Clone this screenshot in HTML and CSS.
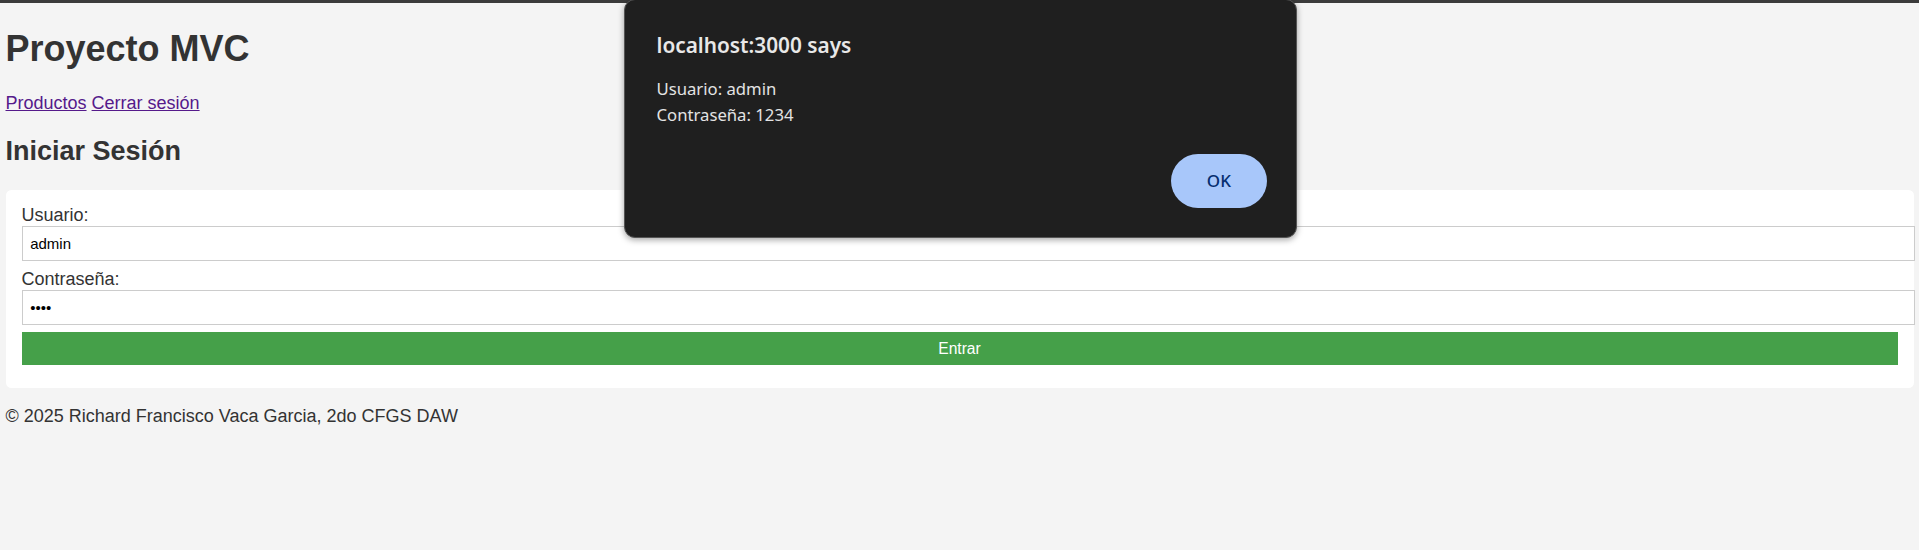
FILE: index.html
```html
<!DOCTYPE html>
<html lang="es">
<head>
<meta charset="utf-8">
<title>Proyecto MVC</title>
<link rel="stylesheet" href="styles.css">
</head>
<body>
<div class="topbar"></div>
<div class="page">
  <header>
    <h1 class="title">Proyecto MVC</h1>
    <nav class="nav"><a href="#productos">Productos</a> <a href="#logout">Cerrar sesión</a></nav>
  </header>
  <main>
    <h2 class="subtitle">Iniciar Sesión</h2>
    <form class="card" onsubmit="return false;">
      <label class="label" for="usuario">Usuario:</label>
      <input class="input" id="usuario" type="text" value="admin">
      <label class="label" for="pass">Contraseña:</label>
      <input class="input" id="pass" type="password" value="1234">
      <button class="submit" type="submit">Entrar</button>
    </form>
  </main>
  <footer class="footer">© 2025 Richard Francisco Vaca Garcia, 2do CFGS DAW</footer>
</div>

<div class="alert" role="alertdialog">
  <div class="alert-title">localhost:3000 says</div>
  <div class="alert-body">
    <div class="alert-line">Usuario: admin</div>
    <div class="alert-line">Contraseña: 1234</div>
  </div>
  <div class="alert-actions">
    <button class="alert-ok" type="button">OK</button>
  </div>
</div>
</body>
</html>
```
FILE: styles.css
```css
html, body {
  margin: 0;
  padding: 0;
}
body {
  background: #f4f4f4;
  color: #333;
  font-family: "Liberation Sans", Arial, sans-serif;
  font-size: 18px;
  position: relative;
  min-height: 550px;
}
.topbar {
  height: 3px;
  background: #3b3b3b;
}
.page {
  padding: 0 5.5px;
  display: flow-root;
}
.title {
  font-size: 36px;
  font-weight: bold;
  margin: 25.6px 0 23.6px;
  line-height: 40.5px;
}
.nav {
  line-height: 20.2px;
}
.nav a {
  color: #551a8b;
  text-decoration: underline;
}
.subtitle {
  font-size: 27px;
  font-weight: bold;
  margin: 23.4px 0 23.3px;
  line-height: 30.3px;
}
.card {
  background: #fff;
  border-radius: 5.5px;
  padding: 15px 16px 22.7px;
  margin: 0;
}
.label {
  display: block;
  line-height: 21.3px;
  color: #333;
}
.input {
  display: block;
  width: 100%;
  padding: 7.7px;
  border: 1px solid #ccc;
  margin: 0 0 8.3px;
  font-family: "Liberation Sans", Arial, sans-serif;
  font-size: 15px;
  line-height: 17px;
  color: #000;
  background: #fff;
  box-sizing: content-box;
  outline: none;
}
.submit {
  display: block;
  width: 100%;
  margin-top: -1px;
  padding: 7.7px 0;
  border: none;
  background: #45a049;
  color: #fff;
  font-family: "Liberation Sans", Arial, sans-serif;
  font-size: 15.6px;
  line-height: 17.7px;
  cursor: pointer;
}
.footer {
  margin-top: 18.5px;
  line-height: 20.2px;
}

/* Browser alert dialog overlay */
.alert {
  position: absolute;
  top: -1px;
  left: 623.5px;
  width: 673px;
  height: 239px;
  box-sizing: border-box;
  background: #1f1f1f;
  border: 1px solid #555;
  border-radius: 11px;
  box-shadow: 0 2px 6px rgba(0, 0, 0, 0.35);
  padding: 32.5px 28.8px 29.3px 32px;
  font-family: "Noto Sans", "Open Sans", sans-serif;
  color: #e3e3e3;
  display: flex;
  flex-direction: column;
}
.alert-title {
  font-size: 20.8px;
  font-weight: 600;
  line-height: 24px;
  color: #e8e8e8;
}
.alert-body {
  margin-top: 19px;
  font-size: 16.7px;
  line-height: 26.7px;
  color: #e3e3e3;
}
.alert-actions {
  margin-top: auto;
  display: flex;
  justify-content: flex-end;
}
.alert-ok {
  width: 95.7px;
  height: 53.7px;
  border: none;
  border-radius: 27px;
  background: #a8c7fa;
  color: #062e6f;
  font-family: "Noto Sans", "Open Sans", sans-serif;
  font-size: 17px;
  font-weight: 500;
  padding: 0;
}
```
